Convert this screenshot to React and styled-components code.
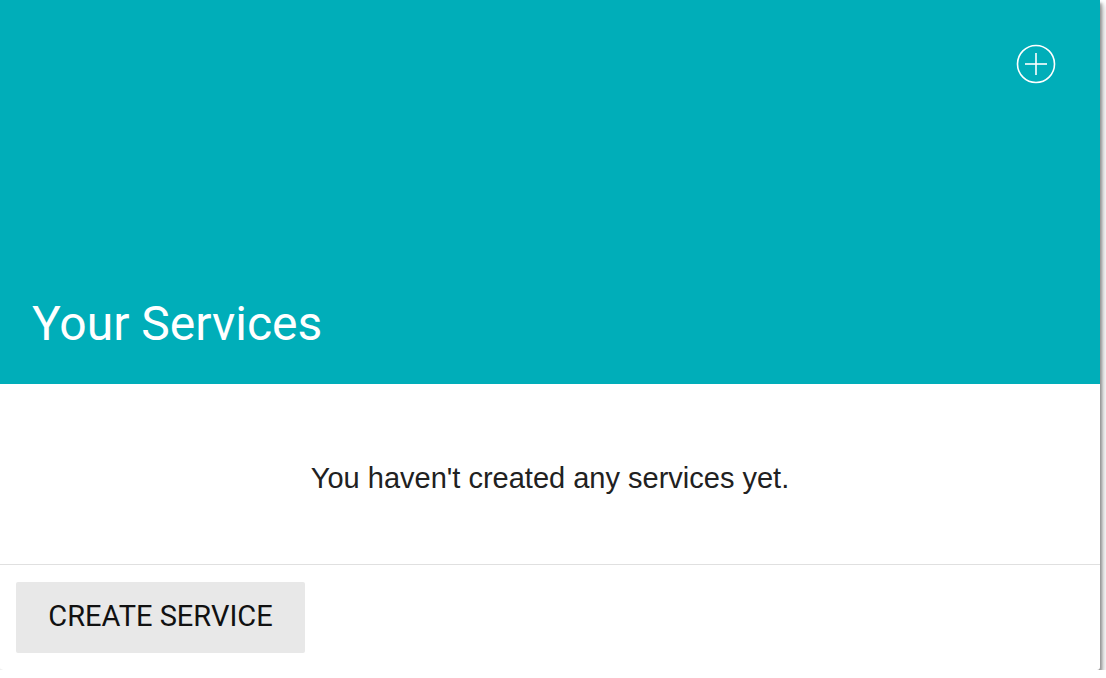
import styled, { createGlobalStyle } from 'styled-components';

const GlobalStyle = createGlobalStyle`
  html, body {
    margin: 0;
    padding: 0;
    background: #ffffff;
  }
`;

const Card = styled.div`
  width: 1100px;
  height: 670px;
  display: flex;
  flex-direction: column;
  background: #ffffff;
  border-radius: 0 0 3px 3px;
  box-shadow: 2px 3px 3px rgba(0, 0, 0, 0.3), 4px 5px 6px rgba(0, 0, 0, 0.2);
  overflow: hidden;
`;

const Header = styled.div`
  height: 384px;
  flex: none;
  background: #00aeb9;
  display: flex;
  flex-direction: column;
  justify-content: space-between;
  padding: 44px 32px 36px;
  box-sizing: border-box;
`;

const Actions = styled.div`
  display: flex;
  justify-content: flex-end;
  padding-right: 12px;
`;

const IconButton = styled.button`
  width: 40px;
  height: 40px;
  padding: 0;
  border: 0;
  background: transparent;
  cursor: pointer;
  display: flex;
  align-items: center;
  justify-content: center;
`;

const Title = styled.h2`
  margin: 0;
  font-family: Roboto, "Liberation Sans", sans-serif;
  font-weight: 400;
  font-size: 48px;
  line-height: 1;
  color: #ffffff;
`;

const Body = styled.div`
  flex: 1;
  display: flex;
  align-items: center;
  justify-content: center;
  border-bottom: 1px solid #e0e0e0;
  padding-top: 8px;
`;

const Message = styled.p`
  margin: 0;
  font-family: "Liberation Sans", Arial, sans-serif;
  font-size: 29px;
  color: #212121;
`;

const Footer = styled.div`
  height: 105px;
  flex: none;
  padding: 17px 16px;
  box-sizing: border-box;
`;

const Button = styled.button`
  width: 289px;
  height: 71px;
  border: 0;
  border-radius: 2px;
  background: #e8e8e8;
  font-family: Roboto, "Liberation Sans", sans-serif;
  font-size: 29px;
  line-height: 1;
  padding: 0 0 3px;
  color: #111111;
  cursor: pointer;
`;

const PlusCircle = () => (
  <svg width="40" height="40" viewBox="0 0 40 40" fill="none" stroke="#ffffff" strokeWidth="1.6">
    <circle cx="20" cy="20" r="18.5" />
    <line x1="20" y1="9" x2="20" y2="31" />
    <line x1="9" y1="20" x2="31" y2="20" />
  </svg>
);

export default function App() {
  return (
    <>
      <GlobalStyle />
      <Card>
        <Header>
          <Actions>
            <IconButton aria-label="Add service">
              <PlusCircle />
            </IconButton>
          </Actions>
          <Title>Your Services</Title>
        </Header>
        <Body>
          <Message>You haven't created any services yet.</Message>
        </Body>
        <Footer>
          <Button>CREATE SERVICE</Button>
        </Footer>
      </Card>
    </>
  );
}
